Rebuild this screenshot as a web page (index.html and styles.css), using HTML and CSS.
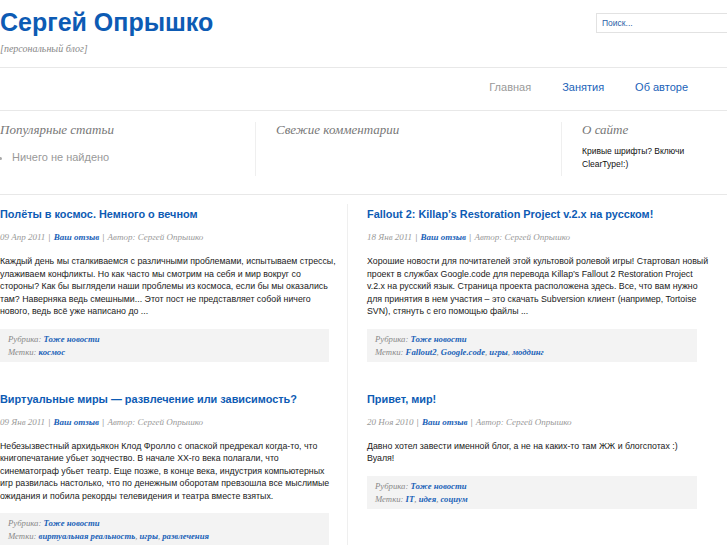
FILE: index.html
```html
<!DOCTYPE html>
<html lang="ru">
<head>
<meta charset="utf-8">
<title>Сергей Опрышко</title>
<link rel="stylesheet" href="styles.css">
</head>
<body>
<header class="header">
  <div class="brand">
    <h1 class="site-title"><a href="#">Сергей Опрышко</a></h1>
    <div class="tagline">[персональный блог]</div>
  </div>
  <form class="search"><input class="search-input" type="text" placeholder="Поиск..."></form>
</header>
<nav class="nav">
  <a class="nav-item current" href="#">Главная</a>
  <a class="nav-item" href="#">Занятия</a>
  <a class="nav-item" href="#">Об авторе</a>
</nav>
<section class="widgets">
  <div class="widget w1">
    <h3 class="widget-title">Популярные статьи</h3>
    <ul class="widget-list"><li>Ничего не найдено</li></ul>
  </div>
  <div class="widget w2">
    <h3 class="widget-title">Свежие комментарии</h3>
  </div>
  <div class="widget w3">
    <h3 class="widget-title">О сайте</h3>
    <p class="about">Кривые шрифты? Включи ClearType!:)</p>
  </div>
</section>
<main class="posts">
  <div class="col left">
    <article class="post">
      <h2 class="post-title"><a href="#">Полёты в космос. Немного о вечном</a></h2>
      <div class="meta">09 Апр 2011 <span class="sep">|</span> <a href="#">Ваш отзыв</a> <span class="sep">|</span> Автор: Сергей Опрышко</div>
      <p class="excerpt">Каждый день мы сталкиваемся с различными проблемами, испытываем стрессы,<br>улаживаем конфликты. Но как часто мы смотрим на себя и мир вокруг со<br>стороны? Как бы выглядели наши проблемы из космоса, если бы мы оказались<br>там? Наверняка ведь смешными... Этот пост не представляет собой ничего<br>нового, ведь всё уже написано до ...</p>
      <div class="post-foot">
        <div>Рубрика: <a href="#">Тоже новости</a></div>
        <div>Метки: <a href="#">космос</a></div>
      </div>
    </article>
    <article class="post">
      <h2 class="post-title"><a href="#">Виртуальные миры — развлечение или зависимость?</a></h2>
      <div class="meta">09 Янв 2011 <span class="sep">|</span> <a href="#">Ваш отзыв</a> <span class="sep">|</span> Автор: Сергей Опрышко</div>
      <p class="excerpt">Небезызвестный архидьякон Клод Фролло с опаской предрекал когда-то, что<br>книгопечатание убьет зодчество. В начале XX-го века полагали, что<br>синематограф убьет театр. Еще позже, в конце века, индустрия компьютерных<br>игр развилась настолько, что по денежным оборотам превзошла все мыслимые<br>ожидания и побила рекорды телевидения и театра вместе взятых.</p>
      <div class="post-foot">
        <div>Рубрика: <a href="#">Тоже новости</a></div>
        <div>Метки: <a href="#">виртуальная реальность</a>, <a href="#">игры</a>, <a href="#">развлечения</a></div>
      </div>
    </article>
  </div>
  <div class="col right">
    <article class="post">
      <h2 class="post-title"><a href="#">Fallout 2: Killap’s Restoration Project v.2.x на русском!</a></h2>
      <div class="meta">18 Янв 2011 <span class="sep">|</span> <a href="#">Ваш отзыв</a> <span class="sep">|</span> Автор: Сергей Опрышко</div>
      <p class="excerpt">Хорошие новости для почитателей этой культовой ролевой игры! Стартовал новый<br>проект в службах Google.code для перевода Killap’s Fallout 2 Restoration Project<br>v.2.x на русский язык. Страница проекта расположена здесь. Все, что вам нужно<br>для принятия в нем участия – это скачать Subversion клиент (например, Tortoise<br>SVN), стянуть с его помощью файлы ...</p>
      <div class="post-foot">
        <div>Рубрика: <a href="#">Тоже новости</a></div>
        <div>Метки: <a href="#">Fallout2</a>, <a href="#">Google.code</a>, <a href="#">игры</a>, <a href="#">моддинг</a></div>
      </div>
    </article>
    <article class="post">
      <h2 class="post-title"><a href="#">Привет, мир!</a></h2>
      <div class="meta">20 Ноя 2010 <span class="sep">|</span> <a href="#">Ваш отзыв</a> <span class="sep">|</span> Автор: Сергей Опрышко</div>
      <p class="excerpt">Давно хотел завести именной блог, а не на каких-то там ЖЖ и блогспотах :)<br>Вуаля!</p>
      <div class="post-foot">
        <div>Рубрика: <a href="#">Тоже новости</a></div>
        <div>Метки: <a href="#">IT</a>, <a href="#">идея</a>, <a href="#">социум</a></div>
      </div>
    </article>
  </div>
</main>
</body>
</html>
```
FILE: styles.css
```css
html, body {
  margin: 0;
  padding: 0;
  background: #fff;
}
body {
  width: 727px;
  height: 545px;
  overflow: hidden;
  font-family: "Liberation Sans", Arial, sans-serif;
  color: #222;
}
a { text-decoration: none; color: #1a62b8; }

.header {
  display: flex;
  justify-content: space-between;
  height: 67px;
  border-bottom: 1px solid #e8e8e8;
}
.site-title {
  margin: 8px 0 0 0;
  font-size: 25px;
  font-weight: bold;
  line-height: 28px;
}
.site-title a { color: #0d5bb4; }
.tagline {
  margin-top: 7px;
  font-family: "Liberation Serif", serif;
  font-style: italic;
  font-size: 10px;
  color: #888;
}
.search { margin: 12px 0 0 0; }
.search-input {
  box-sizing: border-box;
  width: 140px;
  height: 20px;
  margin-right: -9px;
  border: 1px solid #e2e2e2;
  padding: 0 0 0 5px;
  font-family: "Liberation Sans", Arial, sans-serif;
  font-size: 8.5px;
  outline: none;
}
.search-input::placeholder { color: #2a5fa8; opacity: 1; }

.nav {
  display: flex;
  justify-content: flex-end;
  align-items: center;
  gap: 31px;
  box-sizing: border-box;
  height: 43px;
  padding: 0 39px 4px 0;
  border-bottom: 1px solid #e8e8e8;
  font-size: 11px;
}
.nav-item { color: #1a62b8; }
.nav-item.current { color: #999; }

.widgets {
  display: grid;
  grid-template-columns: 256px 306px 165px;
  height: 83px;
  border-bottom: 1px solid #e8e8e8;
}
.widget {
  padding-top: 11px;
}
.w2, .w3 { padding-left: 20px; }
.w1, .w2 {
  border-right: 1px solid #efefef;
  margin-top: 11px;
  margin-bottom: 18px;
  padding-top: 0;
}
.widget-title {
  margin: 0;
  font-family: "Liberation Serif", serif;
  font-style: italic;
  font-weight: normal;
  font-size: 13px;
  line-height: 16px;
  color: #777;
}
.widget-list {
  margin: 13px 0 0 0;
  padding: 0 0 0 12px;
  font-size: 11px;
  color: #999;
}
.widget-list li::marker { color: #aaa; }
.about {
  margin: 7px 0 0 0;
  font-size: 8.5px;
  line-height: 13px;
  color: #111;
  width: 120px;
}

.posts {
  display: grid;
  grid-template-columns: 348px 379px;
}
.col { padding-top: 12px; }
.left {
  border-right: 1px solid #efefef;
  padding-right: 18px;
  margin-top: 9px;
  padding-top: 3px;
}
.right { padding-left: 19px; padding-right: 30px; }
.post { margin-bottom: 30px; }
.post-title {
  margin: 0;
  font-size: 10.9px;
  line-height: 15px;
  font-weight: bold;
}
.post-title a { color: #0d5bb4; }
.meta {
  margin-top: 9px;
  font-family: "Liberation Serif", serif;
  font-style: italic;
  font-size: 9px;
  line-height: 13px;
  color: #999;
}
.meta a { font-weight: bold; color: #1a62b8; }
.meta .sep { font-style: normal; color: #777; padding: 0 1px; }
.excerpt {
  margin: 11px 0 0 0;
  font-size: 8.8px;
  line-height: 12.5px;
  white-space: nowrap;
  color: #1a1a1a;
}
.post-foot {
  margin-top: 11px;
  background: #f3f3f3;
  padding: 4px 8px 3px 8px;
  font-family: "Liberation Serif", serif;
  font-style: italic;
  font-size: 8.7px;
  line-height: 13px;
  color: #888;
}
.post-foot a { font-weight: bold; color: #1a62b8; }
```
